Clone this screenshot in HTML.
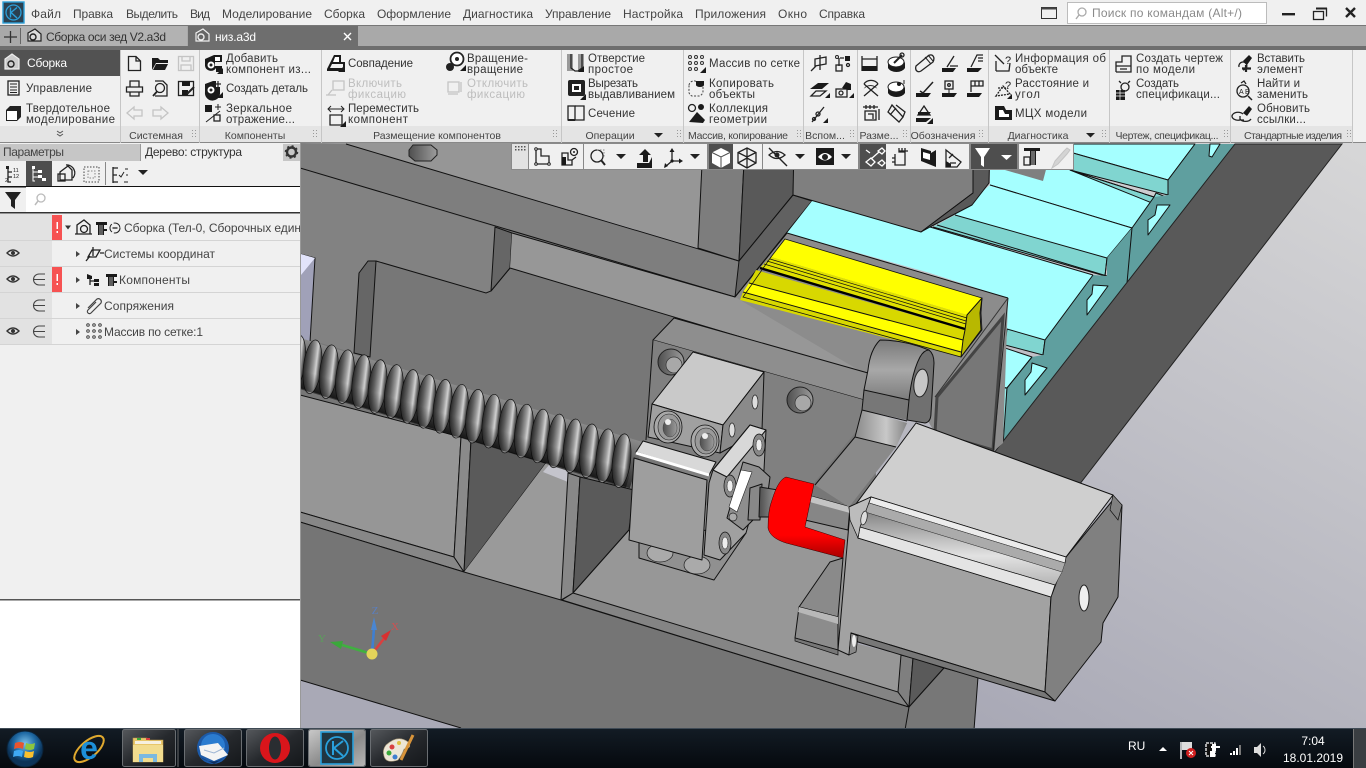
<!DOCTYPE html>
<html lang="ru"><head><meta charset="utf-8"><title>КОМПАС-3D</title>
<style>
html,body{margin:0;padding:0;width:1366px;height:768px;overflow:hidden;background:#f0f0f0}
svg{display:block;font-family:"Liberation Sans","DejaVu Sans",sans-serif}
.m{font-size:12px;fill:#444}
.r{font-size:11.5px;fill:#333}
.d{font-size:11.5px;fill:#bdbdbd}
.g{font-size:10.5px;fill:#444;text-anchor:middle}
.e{stroke:#111;stroke-width:1;stroke-linejoin:round}
.l{stroke:#111;stroke-width:1;fill:none}
.i{fill:none;stroke:#222;stroke-width:1.3}
.k{fill:#1a1a1a}
.gd{fill:none;stroke:#c4c4c4;stroke-width:1.3}
</style></head><body>
<svg width="1366" height="768" viewBox="0 0 1366 768" xmlns="http://www.w3.org/2000/svg">
<defs>
<linearGradient id="bg" gradientUnits="userSpaceOnUse" x1="1340" y1="143" x2="1020" y2="740"><stop offset="0" stop-color="#d6d6d7"/><stop offset="1" stop-color="#a9a9b6"/></linearGradient>
<linearGradient id="th" x1="0" x2="1" y1="0" y2="0"><stop offset="0" stop-color="#262626"/><stop offset=".3" stop-color="#5e5e5e"/><stop offset=".55" stop-color="#9c9c9c"/><stop offset=".7" stop-color="#d0d0d0"/><stop offset=".85" stop-color="#6c6c6c"/><stop offset="1" stop-color="#262626"/></linearGradient>
<linearGradient id="thv" x1="0" x2="0" y1="0" y2="1"><stop offset="0" stop-color="#8a8a8a"/><stop offset=".5" stop-color="#5a5a5a"/><stop offset="1" stop-color="#2e2e2e"/></linearGradient>
<linearGradient id="ths2" x1="0" x2="0" y1="0" y2="1"><stop offset="0" stop-color="#000" stop-opacity="0"/><stop offset="1" stop-color="#000" stop-opacity=".5"/></linearGradient>
<linearGradient id="red" x1="0" x2="0" y1="0" y2="1"><stop offset="0" stop-color="#ff0000"/><stop offset=".72" stop-color="#ff0000"/><stop offset="1" stop-color="#a80000"/></linearGradient>
<linearGradient id="gr" x1="0" x2="0" y1="0" y2="1"><stop offset="0" stop-color="#858585"/><stop offset=".6" stop-color="#e2e2e2"/><stop offset="1" stop-color="#b5b5b5"/></linearGradient>
<linearGradient id="ear" x1="0" x2="0" y1="0" y2="1"><stop offset="0" stop-color="#7a7a7a"/><stop offset=".5" stop-color="#a8a8a8"/><stop offset="1" stop-color="#7c7c7c"/></linearGradient>
<linearGradient id="fil" x1="0" x2="1" y1="0" y2="0"><stop offset="0" stop-color="#8a8a8a"/><stop offset=".6" stop-color="#c8c8c8"/><stop offset="1" stop-color="#858585"/></linearGradient>
<linearGradient id="oc" x1="0" x2="1" y1="0" y2="0"><stop offset="0" stop-color="#4f4f4f"/><stop offset="1" stop-color="#9c9c9c"/></linearGradient>
<linearGradient id="tb" x1="0" x2="0" y1="0" y2="1"><stop offset="0" stop-color="#131c25"/><stop offset="1" stop-color="#05090e"/></linearGradient>
<linearGradient id="btn" x1="0" x2="1" y1="0" y2="1"><stop offset="0" stop-color="#55585c"/><stop offset=".5" stop-color="#26292d"/><stop offset="1" stop-color="#14171a"/></linearGradient>
<linearGradient id="btna" x1="0" x2="1" y1="0" y2="1"><stop offset="0" stop-color="#c8c8c8"/><stop offset=".55" stop-color="#8a8a8a"/><stop offset="1" stop-color="#b5b5b5"/></linearGradient>
<radialGradient id="orb" cx=".5" cy=".35"><stop offset="0" stop-color="#7cc0e8"/><stop offset=".6" stop-color="#1f6aa5"/><stop offset="1" stop-color="#0c3358"/></radialGradient>
<clipPath id="vp"><rect x="300" y="143" width="1066" height="585"/></clipPath>
<clipPath id="tc"><rect x="64" y="218" width="236" height="20"/></clipPath>
<g id="ths"><ellipse cx="0" cy="0" rx="9" ry="27" fill="url(#th)" stroke="#111" stroke-width=".7" transform="rotate(-10)"/></g>
<g id="hl"><ellipse cx="0" cy="0" rx="14" ry="16" fill="#a8a8a8" stroke="#111" stroke-width=".8"/><ellipse cx="1" cy="0" rx="11" ry="13" fill="#9a9a9a" stroke="#222" stroke-width=".6"/><ellipse cx="2" cy="1" rx="7" ry="9" fill="url(#oc)" stroke="#333" stroke-width=".4"/><ellipse cx="0" cy="-5" rx="3" ry="3" fill="#eee"/></g>
<g id="bh"><ellipse cx="0" cy="0" rx="6" ry="11" fill="#888" stroke="#111" stroke-width=".7"/><ellipse cx="0" cy="0" rx="3" ry="6" fill="#eee" stroke="#222" stroke-width=".5"/></g>
<g id="ph"><circle cx="0" cy="0" r="13" fill="url(#oc)" stroke="#222"/><ellipse cx="3" cy="3" rx="8" ry="8" fill="#a8a8a8" stroke="#333" stroke-width=".7"/></g>
</defs>

<!-- ================= VIEWPORT ================= -->
<g clip-path="url(#vp)">
<rect x="300" y="143" width="1066" height="585" fill="url(#bg)"/>
<polygon points="300,143 703,143 698,248 346,144" fill="#969696"/>
<polygon points="300,168 735,297 867,375 880,520 640,560 300,420" fill="#777"/>
<polygon points="300,143 346,144 739,261 735,297 300,168" fill="#7e7e7e"/>
<polygon points="300,168 495,227 491,291 486,293 376,261 368,261 359,273 354,353 300,337" fill="#828282"/>
<line class="l" x1="346" y1="144" x2="739" y2="261"/>
<line class="l" x1="300" y1="168" x2="735" y2="297"/>
<polyline class="l" points="376,261 486,293 491,291 510,268"/>
<polygon class="e" points="495,227 512,233 510,268 491,291" fill="#666"/>
<polygon points="512,233 735,297 880,340 867,375 510,268" fill="#979797"/>
<polygon class="e" points="359,273 368,261 376,261 370,357 354,353" fill="#666"/>
<polygon points="413,145 431,145 437,150 437,155 431,161 415,161 409,156 409,150" fill="url(#oc)" stroke="#222"/>
<polygon class="e" points="300,254 315,258 310,342 300,339" fill="#a0a1b8"/>
<polygon points="301,254 315,258 301,275" fill="#e2e3fa"/>
<polygon class="e" points="703,143 745,143 739,261 698,248" fill="#7d7d7d"/>
<polygon class="e" points="745,143 795,143 793,195 739,261" fill="#595959"/>
<polygon class="e" points="793,195 812,201 735,297 739,261" fill="#616161"/>
<polygon points="812,201 930,227 1008,298 930,273 787,233" fill="#a5ffff"/>
<polygon class="e" points="1073,144 1195,144 1168,180 1073,153" fill="#a5ffff"/>
<polygon class="e" points="1073,153 1168,180 1168,195 1070,170" fill="#80d5d0"/>
<polygon points="990,170 1070,170 1154,197 1132,228 990,185" fill="#a5ffff"/>
<polygon class="e" points="1070,170 1154,197 1156,193 1171,199 1168,207 1157,205" fill="#80d5d0"/>
<line class="l" x1="990" y1="185" x2="1132" y2="228"/>
<line class="l" x1="1070" y1="170" x2="1154" y2="197"/>
<polygon points="990,185 1132,228 1107,258 955,215" fill="#a5ffff"/>
<polygon points="955,215 1107,258 1105,276 933,227" fill="#80d5d0"/>
<polyline class="l" points="990,185 1132,228 1107,258 955,215"/>
<polyline class="l" points="1107,258 1105,276 933,227"/>
<line class="l" x1="937" y1="225" x2="1107" y2="276"/>
<polygon points="930,227 1093,275 1045,340 1007,329 1008,298 930,273" fill="#a5ffff"/>
<line class="l" x1="930" y1="227" x2="1093" y2="275"/>
<polygon class="e" points="1007,329 1045,340 1043,355 1005,345" fill="#80d5d0"/>
<polygon class="e" points="1005,348 1032,357 1007,388 1002,387" fill="#a5ffff"/>
<polygon class="e" points="1002,388 1007,388 1004,444 998,442" fill="#90e8e6"/>
<polygon points="1195,144 1235,144 1003,445 1007,388 1032,357 1043,355 1045,340 1093,275 1107,276 1107,258 1132,228 1154,197 1168,195 1168,180" fill="#5f9f9f"/>
<polyline class="l" points="1195,144 1168,180 1168,195"/>
<line class="l" x1="1154" y1="197" x2="1132" y2="228"/>
<line class="l" x1="1132" y1="228" x2="1127" y2="283"/>
<polyline class="l" points="1107,258 1105,276"/>
<polyline class="l" points="1093,275 1045,340 1043,355"/>
<polyline class="l" points="1032,357 1007,388 1003,445"/>
<polygon class="e" points="1210,144 1220,144 1212,157 1209,156" fill="#a5ffff"/>
<polygon class="e" points="1157,205 1170,205 1148,235 1148,220 1155,215" fill="#a5ffff"/>
<polygon class="e" points="1093,285 1108,286 1087,315 1087,300 1092,294" fill="#a5ffff"/>
<polygon class="e" points="1032,363 1047,368 1025,395 1025,380 1031,372" fill="#a5ffff"/>
<polygon points="1235,144 1342,144 1079,485 990,458" fill="#595959" stroke="#222"/>
<polygon class="e" points="794,143 976,143 973,193 921,232 793,195" fill="#7f7f7f"/>
<polygon class="e" points="973,143 990,143 989,183 972,205 930,227 921,232 973,193" fill="#595959"/>
<polygon points="1002,143 1053,143 1043,181 1005,170" fill="#7f7f7f"/>
<polygon points="735,297 787,233 1008,298 1003,443 993,452 935,433 880,340 867,375" fill="#8c8c8c"/>
<polyline class="l" points="787,233 1008,298"/>
<polyline class="l" points="735,297 787,233"/>
<polygon points="1003,317 993,450 935,433 937,397" fill="#777" stroke="#444" stroke-width="3"/>
<line x1="1008" y1="298" x2="935" y2="397" stroke="#333" stroke-width="1"/>
<line x1="1008" y1="298" x2="993" y2="452" stroke="#222" stroke-width="1"/>
<polygon points="785,239 982,298 967,315 771,257" fill="#ff0"/>
<polygon points="771,257 967,315 965,330 760,268" fill="#e0e000"/>
<line x1="770" y1="259" x2="967" y2="318" stroke="#111" stroke-width=".7"/>
<line x1="767" y1="261" x2="966" y2="321" stroke="#111" stroke-width=".7"/>
<line x1="764" y1="264" x2="966" y2="324" stroke="#111" stroke-width=".7"/>
<polygon points="756,270 965,330 963,340 749,283" fill="#d8d800"/>
<polygon points="749,283 963,340 961,352 743,292" fill="#ff0"/>
<polygon points="743,292 961,352 961,357 740,300" fill="#d8d800"/>
<line x1="760" y1="268" x2="965" y2="329" stroke="#000" stroke-width="2.4"/>
<polygon points="785,239 982,298 981,313 982,330 961,357 743,297 771,257" fill="none" stroke="#111" stroke-width=".8"/>
<line class="l" x1="749" y1="283" x2="963" y2="340"/>
<line class="l" x1="743" y1="292" x2="961" y2="352"/>
<polygon class="e" points="982,298 980,313 981,330 961,357 963,340 965,330 967,315" fill="#b8b800" stroke-width=".8"/>
<line class="l" x1="512" y1="233" x2="735" y2="297"/>
<line class="l" x1="510" y1="268" x2="868" y2="375"/>
<polygon points="300,395 461,437 454,557 300,512" fill="#969696" stroke="#111"/>
<polygon points="300,512 454,557 464,572 300,522" fill="#878787" stroke="#111"/>
<polygon class="e" points="461,437 471,440 464,572 454,557" fill="#8a8a8a"/>
<polygon class="e" points="471,440 546,463 464,572" fill="#5a5a5a"/>
<polygon points="546,463 568,473 561,600 464,572" fill="#9a9a9a"/>
<polygon points="543,472 549,465 568,471 568,482" fill="#c4c4cc"/>
<polygon class="e" points="568,473 580,477 573,593 561,600" fill="#888"/>
<polygon class="e" points="580,477 634,490 629,530 573,593" fill="#5a5a5a"/>
<polygon points="573,593 629,530 640,480 850,510 843,640 901,655 898,692" fill="#979797"/>
<line class="l" x1="573" y1="593" x2="629" y2="530"/>
<polygon points="300,522 464,572 561,600 909,707 905,728 461,728 300,680" fill="#757575"/>
<polyline class="l" points="300,522 464,572 561,600 909,707"/>
<polygon points="573,593 898,692 909,707 562,600" fill="#848484" stroke="#111"/>
<line class="l" x1="300" y1="680" x2="461" y2="728"/>
<polygon class="e" points="901,655 913,658 909,707 898,692" fill="#7f7f7f"/>
<polygon class="e" points="913,658 944,668 909,707" fill="#5a5a5a"/>
<polygon class="e" points="944,668 978,677 974,730 905,730 909,707" fill="#777"/>
<g transform="translate(300,363) rotate(16.9)">
<rect x="-10" y="-24" width="362" height="48" fill="url(#thv)"/>
<use href="#ths" x="-4"/><use href="#ths" x="13"/><use href="#ths" x="30"/><use href="#ths" x="47"/><use href="#ths" x="64"/><use href="#ths" x="81"/><use href="#ths" x="98"/><use href="#ths" x="115"/><use href="#ths" x="132"/><use href="#ths" x="149"/><use href="#ths" x="166"/><use href="#ths" x="183"/><use href="#ths" x="200"/><use href="#ths" x="217"/><use href="#ths" x="234"/><use href="#ths" x="251"/><use href="#ths" x="268"/><use href="#ths" x="285"/><use href="#ths" x="302"/><use href="#ths" x="319"/><use href="#ths" x="336"/>
<rect x="-10" y="6" width="358" height="19" fill="url(#ths2)"/>
</g>
<polygon class="e" points="674,318 868,373 864,400 653,340" fill="#8e8e8e"/>
<polygon points="653,340 864,400 860,427 814,483 760,500 720,520 646,440" fill="#808080"/>
<polyline class="l" points="653,340 646,440"/>
<use href="#ph" x="671" y="362"/>
<use href="#ph" x="800" y="400"/>
<polygon class="e" points="693,352 764,372 723,425 652,404" fill="#c9c9c9"/>
<polygon class="e" points="652,404 723,425 720,453 648,437" fill="#a0a0a0"/>
<polygon class="e" points="764,372 723,425 720,453 762,430" fill="#8a8a8a"/>
<use href="#hl" x="668" y="427"/><use href="#hl" x="705" y="441"/>
<ellipse cx="755" cy="402" rx="3" ry="7" fill="#ddd" stroke="#222" stroke-width=".7"/>
<ellipse cx="732" cy="430" rx="3" ry="7" fill="#ddd" stroke="#222" stroke-width=".7"/>
<polygon class="e" points="639,540 639,558 714,580 746,533 700,530" fill="#909090"/>
<ellipse cx="660" cy="553" rx="13" ry="9" fill="#aaa" stroke="#222" stroke-width=".7"/>
<ellipse cx="697" cy="565" rx="13" ry="9" fill="#aaa" stroke="#222" stroke-width=".7"/>
<polygon class="e" points="643,441 716,462 709,475 636,452" fill="#d8d8d8"/>
<line x1="636" y1="453" x2="709" y2="475" stroke="#fff" stroke-width="3"/>
<polygon class="e" points="634,458 707,480 702,560 629,540" fill="#9e9e9e"/>
<polygon class="e" points="713,470 750,425 766,430 764,470 746,533 720,560 704,555 709,483" fill="#a0a0a0"/>
<polygon class="e" points="713,470 750,425 766,430 727,477" fill="#d8d8d8"/>
<use href="#bh" x="730" y="486"/><use href="#bh" x="759" y="445"/><use href="#bh" x="725" y="543"/>
<polygon class="e" points="807,495 850,507 848,530 805,520" fill="#868686"/>
<polygon points="807,495 850,507 850,513 806,501" fill="#c4c4c4"/>
<polygon class="e" points="743,462 759,467 770,477 766,507 743,530 727,518" fill="#8e8e8e"/>
<polygon points="741,470 752,472 737,512 729,507" fill="#fff" stroke="#222" stroke-width=".6"/>
<circle cx="733" cy="517" r="4" fill="#aaa" stroke="#222" stroke-width=".7"/>
<polygon class="e" points="750,488 762,484 760,520 748,520" fill="#888"/>
<polygon class="e" points="760,487 778,490 772,517 759,517" fill="url(#oc)"/>
<path d="M786 477L814 484L805 527L845 540L843 558L786 543Q770 538 768 528Q768 510 772 500Q778 480 786 477Z" fill="url(#red)" stroke="#300" stroke-width=".5"/>
<!-- clevis -->
<polygon points="855,437 907,423 896,447 849,507 815,485" fill="#8a8a8a"/>
<line class="l" x1="855" y1="437" x2="815" y2="485"/>
<polygon points="855,437 896,447 907,423 862,410" fill="url(#fil)"/>
<path d="M880 340Q905 340 929 350Q922 356 918 367L913 380L909 400L864 390L868 370Q871 350 880 340Z" fill="url(#ear)"/>
<polygon points="864,390 909,400 907,420 862,410" fill="#777"/>
<path d="M929 350Q934 354 934 363L931 413Q931 422 925 423L907 420L909 400Q912 372 920 357Q924 350 929 350Z" fill="#707070" stroke="#111"/>
<ellipse cx="921" cy="383" rx="7" ry="14" fill="#c6c6c6" stroke="#222" transform="rotate(8 921 383)"/>
<path class="l" d="M880 340Q870 350 868 370L864 390L862 410L855 437M880 340Q905 340 929 350M864 390L909 400M862 410L907 421M855 437L896 447"/>
<polygon class="e" points="916,423 929,430 930,447 921,445 916,436" fill="#888"/>
<polygon class="e" points="930,430 935,440 995,458 990,470 930,450" fill="#8f8f8f"/>
<line x1="995" y1="458" x2="992" y2="470" stroke="#111"/>
<polygon class="e" points="799,607 830,562 843,558 838,617" fill="#8a8a8a"/>
<polygon class="e" points="799,607 838,617 838,650 795,638" fill="#8c8c8c"/>
<polygon points="799,607 838,617 838,624 798,612" fill="#b8b8b8"/>
<polygon points="795,638 838,650 838,655 795,641" fill="#777" stroke="#111" stroke-width=".7"/>
<!-- motor -->
<polygon class="e" points="850,512 858,538 1051,597 1045,692 851,633 849,655 838,650" fill="#a2a2a2"/>
<polygon class="e" points="851,633 1045,692 1055,701 858,642" fill="#777"/>
<polygon class="e" points="1051,597 1066,557 1113,500 1122,505 1118,597 1103,623 1101,642 1055,701 1045,692" fill="#808080"/>
<ellipse cx="1084" cy="598" rx="5" ry="13" fill="#eee" stroke="#222"/>
<polygon class="e" points="916,423 1113,495 1066,557 871,497 849,507 850,512" fill="#cfcfcf"/>
<polygon points="1113,495 1122,505 1118,520 1110,510" fill="#808080" stroke="#111" stroke-width=".7"/>
<polygon points="871,497 1066,557 1065,563 869,503" fill="#ececec" stroke="#111" stroke-width=".7"/>
<polygon points="869,503 1065,563 1062,572 865,512" fill="#ababab" stroke="#333" stroke-width=".5"/>
<polygon points="865,512 1062,572 1055,585 860,527" fill="url(#gr)" stroke="#333" stroke-width=".5"/>
<polygon points="860,527 1055,585 1051,597 858,538" fill="#e4e4e4" stroke="#111" stroke-width=".7"/>
<polygon points="849,507 871,497 860,527 858,538 850,520" fill="#bcbcbc" stroke="#111" stroke-width=".7"/>
<ellipse cx="864" cy="518" rx="3" ry="7" fill="#ddd" stroke="#222" stroke-width=".7" transform="rotate(12 864 518)"/>
<polygon points="851,633 858,636 856,652 849,655" fill="#888" stroke="#111" stroke-width=".7"/>
<ellipse cx="854" cy="641" rx="2" ry="6" fill="#eee"/>
<!-- triad -->
<line x1="372" y1="654" x2="374" y2="628" stroke="#3f7fd0" stroke-width="2.6"/>
<polygon points="374,617 371,630 377,630" fill="#4a86d2"/>
<text x="375" y="614" font-size="11" fill="#5a7fc0" text-anchor="middle" style="font-family:'Liberation Serif',serif">Z</text>
<line x1="372" y1="654" x2="386" y2="636" stroke="#d84040" stroke-width="2.6"/>
<polygon points="391,630 381,636 386,641" fill="#d83030"/>
<text x="395" y="630" font-size="11" fill="#d05050" text-anchor="middle" style="font-family:'Liberation Serif',serif">X</text>
<line x1="372" y1="654" x2="342" y2="645" stroke="#40b040" stroke-width="2.6"/>
<polygon points="330,642 343,641 341,649" fill="#3aa83a"/>
<text x="322" y="642" font-size="11" fill="#5aa05a" text-anchor="middle" style="font-family:'Liberation Serif',serif">Y</text>
<circle cx="372" cy="654" r="5.5" fill="#e4d45a"/>
</g>

<!-- ================= TITLE BAR ================= -->
<rect x="0" y="0" width="1366" height="26" fill="#f0f0f0"/>
<rect x="0" y="25" width="1366" height="1" fill="#777"/>
<rect x="3" y="2" width="21" height="21" fill="#2b4050" stroke="#2ca0da" stroke-width="1.4"/>
<circle cx="13.5" cy="12.5" r="7.5" fill="none" stroke="#2ca0da" stroke-width="1.3"/>
<path d="M10.5 7.5V17.5M17 7.5L11 12.5L17 18" fill="none" stroke="#2ca0da" stroke-width="1.4"/>
<g class="m">
<text x="31" y="18" textLength="30">Файл</text>
<text x="73" y="18" textLength="40">Правка</text>
<text x="126" y="18" textLength="52">Выделить</text>
<text x="190" y="18" textLength="20">Вид</text>
<text x="222" y="18" textLength="90">Моделирование</text>
<text x="324" y="18" textLength="41">Сборка</text>
<text x="377" y="18" textLength="74">Оформление</text>
<text x="463" y="18" textLength="70">Диагностика</text>
<text x="545" y="18" textLength="66">Управление</text>
<text x="623" y="18" textLength="60">Настройка</text>
<text x="695" y="18" textLength="71">Приложения</text>
<text x="778" y="18" textLength="29">Окно</text>
<text x="819" y="18" textLength="46">Справка</text>
</g>
<rect x="1041.500" y="7.500" width="15" height="11" fill="none" stroke="#333"/><rect x="1041.500" y="7.500" width="15" height="2" fill="#444"/>
<rect x="1067.500" y="2.500" width="199" height="21" fill="#fff" stroke="#bcbcbc"/>
<circle cx="1082" cy="12" r="4" fill="none" stroke="#aaa" stroke-width="1.3"/><line x1="1079" y1="15" x2="1076" y2="19" stroke="#aaa" stroke-width="1.4"/>
<text x="1092" y="17" font-size="12" fill="#8a8a8a" textLength="150">Поиск по командам (Alt+/)</text>
<rect x="1282" y="13" width="13" height="2.4" fill="#222"/>
<rect x="1313.500" y="11.500" width="10" height="8" fill="none" stroke="#222" stroke-width="1.3"/><path d="M1317 8.500h9.500v8" fill="none" stroke="#222" stroke-width="1.3"/><rect x="1316" y="7.500" width="11" height="2" fill="#222"/>
<path d="M1346 8L1355 17M1355 8L1346 17" stroke="#222" stroke-width="2.4"/>

<!-- ================= TAB BAR ================= -->
<rect x="0" y="26" width="1366" height="20" fill="#a9a9a9"/>
<rect x="0" y="46" width="1366" height="4" fill="#6e6e6e"/>
<path d="M4 37H17M10.500 31V43" stroke="#333" stroke-width="1.3"/>
<rect x="20" y="28" width="1" height="16" fill="#666"/>
<rect x="21" y="26" width="166" height="20" fill="#b2b2b2"/>
<rect x="188" y="26" width="170" height="24" fill="#6e6e6e"/>
<path d="M28 41V33L35 29L41 34V41Z" fill="#ddd" stroke="#222" stroke-width="1.2"/><circle cx="33" cy="37" r="3" fill="none" stroke="#222" stroke-width="1.4"/>
<text x="46" y="41" font-size="12" fill="#333" textLength="120">Сборка оси зед V2.a3d</text>
<path d="M196 41V33L203 29L209 34V41Z" fill="#666" stroke="#eee" stroke-width="1.2"/><circle cx="201" cy="37" r="3" fill="none" stroke="#eee" stroke-width="1.4"/>
<text x="215" y="41" font-size="12" fill="#fff" textLength="41">низ.a3d</text>
<path d="M344 33L351 40M351 33L344 40" stroke="#fff" stroke-width="1.4"/>

<!-- ================= RIBBON ================= -->
<rect x="0" y="50" width="1366" height="93" fill="#f0f0f0"/>
<rect x="0" y="126" width="1352" height="17" fill="#e4e4e4"/>
<rect x="0" y="142" width="1366" height="1" fill="#888"/>
<rect x="0" y="50" width="120" height="26" fill="#525252"/>
<path d="M5 69V59L12 54L19 59V69Z" fill="#ccc" stroke="#eee" stroke-width="1.2"/><circle cx="11" cy="64" r="3" fill="none" stroke="#222" stroke-width="1.4"/>
<text x="27" y="67" font-size="12" fill="#fff" textLength="40">Сборка</text>
<rect x="8" y="81" width="11" height="14" fill="none" stroke="#222" stroke-width="1.3"/><path d="M10 84h7M10 87h7M10 90h7M10 92.500h7" stroke="#222"/>
<text x="26" y="92" class="r" textLength="66">Управление</text>
<path d="M6 110L10 106H21V117L17 121H6Z" fill="#222"/><path d="M7 111H17V120H7Z" fill="#fff"/>
<text x="26" y="112" class="r" textLength="84">Твердотельное</text>
<text x="26" y="123" class="r" textLength="89">моделирование</text>
<path d="M57 131l3 2 3-2M57 134l3 2 3-2" fill="none" stroke="#555"/>
<g fill="#c6c6c6">
<rect x="120" y="50" width="1" height="93"/><rect x="199" y="50" width="1" height="93"/><rect x="321" y="50" width="1" height="93"/><rect x="561" y="50" width="1" height="93"/><rect x="683" y="50" width="1" height="93"/><rect x="803" y="50" width="1" height="93"/><rect x="857" y="50" width="1" height="93"/><rect x="910" y="50" width="1" height="93"/><rect x="988" y="50" width="1" height="93"/><rect x="1109" y="50" width="1" height="93"/><rect x="1230" y="50" width="1" height="93"/><rect x="1352" y="50" width="1" height="93"/>
</g>
<g class="g">
<text x="156" y="139">Системная</text><text x="255" y="139">Компоненты</text><text x="437" y="139">Размещение компонентов</text><text x="610" y="139">Операции</text><text x="738" y="139" textLength="100">Массив, копирование</text><text x="825" y="139">Вспом...</text><text x="879" y="139">Разме...</text><text x="943" y="139">Обозначения</text><text x="1038" y="139">Диагностика</text><text x="1167" y="139" textLength="103">Чертеж, спецификац...</text><text x="1293" y="139" textLength="98">Стандартные изделия</text>
</g>
<g fill="#999">
<path id="gp" d="M192 130h1v1h-1zM195 130h1v1h-1zM192 133h1v1h-1zM195 133h1v1h-1zM192 136h1v1h-1zM195 136h1v1h-1z"/>
<use href="#gp" x="121"/>
<use href="#gp" x="361"/><use href="#gp" x="485"/><use href="#gp" x="605"/><use href="#gp" x="658"/><use href="#gp" x="711"/><use href="#gp" x="787"/><use href="#gp" x="910"/><use href="#gp" x="1032"/><use href="#gp" x="1155"/>
</g>
<path d="M654 133h9l-4.500 4.500z M1086 133h9l-4.500 4.500z" fill="#222"/>
<g class="r">
<text x="226" y="62" textLength="52">Добавить</text><text x="226" y="73" textLength="85">компонент из...</text>
<text x="226" y="92" textLength="82">Создать деталь</text>
<text x="226" y="112" textLength="66">Зеркальное</text><text x="226" y="123" textLength="69">отражение...</text>
<text x="348" y="67" textLength="65">Совпадение</text>
<text x="348" y="112" textLength="71">Переместить</text><text x="348" y="123" textLength="60">компонент</text>
<text x="467" y="62" textLength="61">Вращение-</text><text x="467" y="73" textLength="56">вращение</text>
<text x="588" y="62" textLength="57">Отверстие</text><text x="588" y="73" textLength="45">простое</text>
<text x="588" y="87" textLength="50">Вырезать</text><text x="588" y="98" textLength="87">выдавливанием</text>
<text x="588" y="117" textLength="47">Сечение</text>
<text x="709" y="67" textLength="91">Массив по сетке</text>
<text x="709" y="87" textLength="65">Копировать</text><text x="709" y="98" textLength="46">объекты</text>
<text x="709" y="112" textLength="59">Коллекция</text><text x="709" y="123" textLength="58">геометрии</text>
<text x="1015" y="62" textLength="91">Информация об</text><text x="1015" y="73" textLength="43">объекте</text>
<text x="1015" y="87" textLength="74">Расстояние и</text><text x="1015" y="98" textLength="25">угол</text>
<text x="1015" y="117" textLength="72">МЦХ модели</text>
<text x="1136" y="62" textLength="87">Создать чертеж</text><text x="1136" y="73" textLength="59">по модели</text>
<text x="1136" y="87" textLength="43">Создать</text><text x="1136" y="98" textLength="84">спецификаци...</text>
<text x="1257" y="62" textLength="48">Вставить</text><text x="1257" y="73" textLength="46">элемент</text>
<text x="1257" y="87" textLength="43">Найти и</text><text x="1257" y="98" textLength="51">заменить</text>
<text x="1257" y="112" textLength="53">Обновить</text><text x="1257" y="123" textLength="49">ссылки...</text>
</g>
<g class="d">
<text x="348" y="87" textLength="54">Включить</text><text x="348" y="98" textLength="58">фиксацию</text>
<text x="467" y="87" textLength="61">Отключить</text><text x="467" y="98" textLength="58">фиксацию</text>
</g>
<path class="i" d="M128.500 56.500H136L140.500 61V70.500H128.500ZM136 56.500V61H140.500"/>
<path class="k" d="M152 58H158L160 60H168V63H156L152 70ZM156 64H168L165 70H153Z"/>
<rect class="gd" x="178.500" y="56.500" width="15" height="14"/><path class="gd" d="M182 56.500V61H190V56.500M181 70V65H191V70"/>
<path class="i" d="M130 87V81H139V87M126.500 87H142.500V92H126.500ZM130 92V96H139V92"/>
<path class="i" d="M155 81H163L167 85V96H155"/><circle class="i" cx="160" cy="88" r="4.500"/><path d="M157 91.500L153 96" stroke="#222" stroke-width="1.800"/>
<rect class="i" x="178.500" y="81.500" width="15" height="14"/><path class="k" d="M182 81H190V86H182ZM182 90H188V95H182Z"/><path d="M187 94L194 87" stroke="#222" stroke-width="2"/>
<path class="gd" d="M127 113L134 107V110H142V116H134V119ZM168 113L161 107V110H153V116H161V119Z"/>
<path class="k" d="M205 59L214 55H222V62H215V66L222 66V72H216V68A6 6 0 0 1 205 66Z"/><circle cx="211" cy="65" r="3.500" fill="#fff"/><circle cx="211" cy="65" r="1.500" fill="#222"/><rect x="215" y="57" width="5" height="4" fill="#fff"/>
<path class="k" d="M217 74L223 68V74Z"/>
<path class="k" d="M205 84L213 81H216V87H220V94A7 7 0 0 1 205 92Z"/><circle cx="211" cy="90" r="3.500" fill="#fff"/><circle cx="211" cy="90" r="1.500" fill="#222"/><path d="M218 81V87M215 84H221" stroke="#222" stroke-width="1.200"/><path class="k" d="M217 98L223 92V98Z"/>
<rect class="k" x="205" y="105" width="7" height="7"/><path d="M218 104V110M215 107H221" stroke="#222"/><path d="M206 122L220 111" stroke="#222"/><rect class="i" x="214" y="115" width="6" height="6"/>
<path class="k" d="M327 69L334 55H341V62H345V71H327ZM330 68H343V64H332Z"/><path class="k" d="M338 72L345 65V72Z"/><path d="M335 57H339V62H333Z" fill="#fff"/>
<path class="gd" d="M333 81H344V90H333ZM332 90L328 95M326 95H336"/>
<path class="i" d="M330 115H342V125H330Z"/><path d="M328 109H344M331 106L328 109L331 112M341 106L344 109L341 112" fill="none" stroke="#222"/><path class="k" d="M340 127L346 121V127Z"/>
<circle cx="450" cy="67" r="4" fill="#222"/><circle cx="457" cy="59" r="6.500" fill="#fff" stroke="#222" stroke-width="1.800"/><circle cx="457" cy="59" r="2" fill="#222"/><path class="k" d="M460 71L466 65V71Z"/>
<path class="gd" d="M448 82H459V92H448ZM461 82V92M448 94H458"/>
<path fill="#999" d="M567 54H573V71H567ZM584 54H578V71H584Z"/><path class="i" d="M571 54V68L575 71H578L582 68V54"/><path class="k" d="M578 72L584 66V72Z"/>
<rect x="568" y="80" width="17" height="16" rx="2" fill="#222"/><rect x="572" y="84" width="9" height="8" fill="#fff"/><rect x="574" y="86" width="5" height="4" fill="#222"/><path class="k" d="M580 100L586 94V100Z"/>
<rect class="i" x="568" y="106" width="7" height="14"/><path class="i" d="M575 106L578 106H584V120H575"/><path d="M568 120L575 120" stroke="#222" stroke-width="2"/>
<g fill="none" stroke="#333"><circle cx="690" cy="57" r="1.500"/><circle cx="696" cy="57" r="1.500"/><circle cx="702" cy="57" r="1.500"/><circle cx="690" cy="63" r="1.500"/><circle cx="696" cy="63" r="1.500"/><circle cx="702" cy="63" r="1.500"/><circle cx="690" cy="69" r="1.500"/><circle cx="696" cy="69" r="1.500"/></g><path class="k" d="M700 73L706 67V73Z"/>
<path d="M689 85a5 5 0 0 1 8-3h6v9a5 5 0 0 1-4 5h-7a5 5 0 0 1-3-6Z" fill="none" stroke="#444" stroke-dasharray="2 1.500"/><path class="k" d="M696 81h8v4a4 2 0 0 1-8 0Z"/>
<circle cx="692" cy="108" r="3.500" class="i"/><circle cx="701" cy="107" r="3" class="k"/><path class="k" d="M689 122L697 112L705 120L703 123Z"/>
<path class="i" d="M815 66L815 59L826 57L826 64ZM820 55V70M811 71L816 66"/><circle cx="837" cy="57" r="1.500" fill="none" stroke="#222"/><rect class="k" x="845" y="56" width="5" height="5"/><path class="i" d="M840 58H844M839 58V66"/><rect class="i" x="836" y="65" width="6" height="6"/><circle cx="848" cy="65" r="1.500" class="i"/>
<path class="k" d="M810 89L818 83H829L822 89Z"/><path class="i" d="M811 96L816 91H826L820 96Z"/><path class="k" d="M825 98L830 93V98Z"/>
<rect class="i" x="836" y="89" width="11" height="8"/><circle class="i" cx="841" cy="93" r="2"/><path class="k" d="M842 88L846 82L851 84V90H848Z"/><path class="k" d="M849 98L854 93V98Z"/>
<path class="i" d="M812 122L824 107"/><circle cx="818" cy="114" r="2" class="i"/><circle cx="814" cy="119" r="1.500" class="i"/><path class="k" d="M823 123L828 118V123Z"/>
<path class="i" d="M862 56V71M877 56V71M862 59H877"/><path class="k" d="M862 66H877V71H862Z"/>
<path class="k" d="M888 62A9 6 0 0 0 905 62V68A9 6 0 0 1 888 68Z"/><ellipse cx="896" cy="62" rx="8" ry="5" fill="#fff" stroke="#222"/><path d="M894 63L902 55" stroke="#222" stroke-width="2"/><circle cx="902" cy="55" r="2" class="i"/>
<path class="k" d="M863 90A9 9 0 0 1 878 90L876 87A7 5 0 0 0 865 87Z"/><path class="i" d="M864 84A8 7 0 0 1 878 84M864 96L878 84M864 84L878 96"/>
<path class="k" d="M888 87A9 6 0 0 0 905 87V93A9 6 0 0 1 888 93Z"/><ellipse cx="896" cy="87" rx="8" ry="5" fill="#fff" stroke="#222"/><circle cx="899" cy="84" r="2" class="k"/><path d="M904 80v4" stroke="#222"/>
<rect class="i" x="865" y="111" width="11" height="9"/><path class="i" d="M863 107h15M866 105v4M870 105v4M874 105v4M868 114h5v5M879 109v11"/>
<path class="i" d="M892 105L903 117L899 122L888 112ZM896 108L890 115M903 117L905 112L896 105"/>
<path class="i" d="M916 66L928 56A4 6 30 0 1 933 62L921 71A4 6 30 0 1 916 66Z"/><path d="M925 57L931 64M928 55L933 61" stroke="#222"/>
<path class="k" d="M942 68H956L953 72H942Z"/><path class="i" d="M947 67L954 56M950 66H958"/>
<path class="k" d="M967 68H982L978 72H967Z"/><path class="i" d="M971 67L977 55H983M978 58H983M978 61H983"/>
<path class="k" d="M916 93H931L928 97H916Z"/><path d="M920 91L923 93L933 82" fill="none" stroke="#222" stroke-width="1.500"/>
<path class="k" d="M942 93H957L954 97H942Z"/><rect class="i" x="945" y="81" width="8" height="8"/><path d="M949 89V93" stroke="#222"/><circle cx="949" cy="85" r="1.300" class="i"/>
<path class="k" d="M967 93H982L979 97H967Z"/><path class="i" d="M971 92V81H983V86H971M975 81V86M979 81V86"/>
<path class="k" d="M916 118H931L926 122H916Z"/><path class="i" d="M924 106L930 115H918Z"/><path class="k" d="M918 112H931L928 115H918Z"/><path class="k" d="M927 124L933 118V124Z"/>
<path class="i" d="M996 71H1009L1010 63M996 71L996 61M995 55L1004 64"/><text x="1005" y="64" font-size="11" fill="#222">?</text>
<path class="i" d="M996 96L1003 86L1010 94L996 96ZM998 88H1008" stroke-dasharray="2 1"/><text x="1005" y="89" font-size="11" fill="#222">?</text><path class="k" d="M1007 99L1012 94V99Z"/>
<path class="k" d="M995 106H1004L1006 110H1012V120H995Z"/><path d="M999 110H1003L1005 114H1009V117H999Z" fill="#fff"/>
<path class="i" d="M1116 72V62H1122V56H1131V66H1116M1116 72H1131V66M1120 69H1127"/>
<rect class="k" x="1116" y="90" width="9" height="10"/><path d="M1116 93H1125M1116 96H1125M1120 90V100" stroke="#fff" stroke-width=".7"/><circle class="i" cx="1125" cy="87" r="4"/><path class="i" d="M1119 81L1121 83M1130 81L1128 83"/>
<path class="i" d="M1239 67A4 4 0 1 1 1243 70"/><path class="k" d="M1243 61L1249 55L1252 58L1247 65Z"/><path d="M1246 65V72M1242 68.500H1251" stroke="#222" stroke-width="2.200"/>
<circle class="i" cx="1243" cy="91" r="6"/><text x="1239" y="94" font-size="7" fill="#222">A</text><text x="1245" y="94" font-size="7" fill="#222">B</text><path d="M1248 96L1252 100" stroke="#222" stroke-width="1.500"/><path class="i" d="M1241 83L1244 81L1246 84"/>
<path class="k" d="M1243 113L1249 106L1252 109L1247 116Z"/><path class="i" d="M1243 114A6 4 0 1 0 1240 120M1240 119A6 4 0 0 0 1251 119M1240 116L1240 120L1244 120"/>

<!-- ================= LEFT PANEL ================= -->
<rect x="0" y="143" width="300" height="457" fill="#f0f0f0"/>
<rect x="0" y="600" width="300" height="128" fill="#fff"/>
<rect x="0" y="599" width="300" height="1.500" fill="#555"/>
<rect x="300" y="143" width="1" height="585" fill="#999"/>
<rect x="0" y="144" width="140" height="17" fill="#c6c6c6"/>
<rect x="140" y="144" width="1" height="17" fill="#999"/>
<rect x="283" y="144" width="17" height="17" fill="#c6c6c6"/>
<text x="3" y="156" font-size="12" fill="#444" textLength="61">Параметры</text>
<text x="145" y="156" font-size="12" fill="#333" textLength="97">Дерево: структура</text>
<circle cx="291.500" cy="152" r="4.500" fill="none" stroke="#333" stroke-width="2.400"/><circle cx="291.500" cy="152" r="6" fill="none" stroke="#333" stroke-width="1.500" stroke-dasharray="2 2.700"/>
<rect x="26" y="161" width="26" height="25" fill="#4e4e4e"/>
<rect x="105" y="162" width="1" height="23" fill="#888"/>
<path class="i" d="M8 168V182H11M8 172H12M8 177H12" stroke-width="1"/><rect x="6" y="166" width="3" height="3" fill="#222"/><text x="13" y="172" font-size="5.500" fill="#222">11</text><text x="13" y="178" font-size="5.500" fill="#222">12</text><text x="5" y="182" font-size="5.500" fill="#222">2</text>
<path d="M33 167V181H35M33 172H38M33 177H38" fill="none" stroke="#fff"/><rect x="32" y="166" width="3" height="3" fill="#fff"/><rect x="38" y="170" width="4" height="3" fill="#fff"/><rect x="38" y="175" width="4" height="3" fill="#fff"/><rect x="42" y="178" width="4" height="3" fill="#fff"/>
<path class="i" d="M60 180V172L68 166L72 170V180ZM66 165A8 8 0 0 1 73 178" stroke-width="1"/><rect class="i" x="58" y="174" width="7" height="7" stroke-width="1"/>
<rect x="84" y="167" width="15" height="15" fill="none" stroke="#444" stroke-dasharray="1.500 1.500"/><rect x="88" y="171" width="7" height="7" fill="none" stroke="#888" stroke-dasharray="1.500 1.500"/>
<path class="i" d="M113 167V183M113 168H118M113 175H117M113 182H118" stroke-width="1"/><path d="M119 175L121 177L124 172" fill="none" stroke="#222"/><path d="M125 169H128M126 175H128M124 182H128" stroke="#222"/>
<path d="M138 170H148L143 175Z" fill="#222"/>
<rect x="0" y="186" width="300" height="1.500" fill="#111"/>
<rect x="26" y="187" width="274" height="25" fill="#fff"/>
<path d="M5 192H21L15 200V209L11 206V200Z" fill="#222"/>
<circle cx="41" cy="198" r="4" fill="none" stroke="#bbb" stroke-width="1.300"/><line x1="38" y1="201" x2="35" y2="205" stroke="#bbb" stroke-width="1.500"/>
<rect x="0" y="212" width="300" height="1.500" fill="#333"/>
<rect x="0" y="214" width="52" height="130" fill="#e2e2e2"/>
<g fill="#d4d4d4"><rect x="0" y="240" width="300" height="1"/><rect x="0" y="266" width="300" height="1"/><rect x="0" y="292" width="300" height="1"/><rect x="0" y="318" width="300" height="1"/><rect x="0" y="344" width="300" height="1"/></g>
<rect x="52" y="215" width="10" height="25" fill="#f65252"/><rect x="52" y="267" width="10" height="25" fill="#f65252"/>
<g fill="#fff"><rect x="56.500" y="222" width="1.500" height="7"/><rect x="56.500" y="231" width="1.500" height="2"/><rect x="56.500" y="274" width="1.500" height="7"/><rect x="56.500" y="283" width="1.500" height="2"/></g>
<g fill="none" stroke="#333" stroke-width="1.400"><path d="M7 253Q13 247 19 253Q13 259 7 253Z"/><path d="M7 279Q13 273 19 279Q13 285 7 279Z"/><path d="M7 331Q13 325 19 331Q13 337 7 331Z"/></g>
<g fill="#333"><circle cx="13" cy="253" r="2"/><circle cx="13" cy="279" r="2"/><circle cx="13" cy="331" r="2"/></g>
<g fill="none" stroke="#444" stroke-width="1.100"><path d="M45 274H39A5 5 0 0 0 39 285H45M34 279.500H45"/><path d="M45 300H39A5 5 0 0 0 39 311H45M34 305.500H45"/><path d="M45 326H39A5 5 0 0 0 39 337H45M34 331.500H45"/></g>
<path d="M65 225.500h6l-3 4z" fill="#333"/><path d="M76 251v6l4-3z M76 277v6l4-3z M76 303v6l4-3z M76 329v6l4-3z" fill="#444"/>
<path class="i" d="M77 234V225L84 220L90 225V234ZM75 234H92" stroke-width="1.200"/><circle class="i" cx="84" cy="229" r="3.500" stroke-width="1.500"/>
<path class="k" d="M96 222H107V225H104V229H107V231H104V235H98V225H96Z"/><path d="M100 225V235M102 225V235" stroke="#fff" stroke-width=".6"/>
<circle cx="115" cy="228" r="5" fill="none" stroke="#222" stroke-dasharray="9 2"/><path d="M112.500 228H117.500" stroke="#222" stroke-width="1.300"/>
<text x="124" y="232" font-size="12" fill="#444" clip-path="url(#tc)" textLength="177">Сборка (Тел-0, Сборочных един</text>
<path class="i" d="M92 250H100L96 257H88ZM93 247V256M86 261L90 256M100 253H104" stroke-width="1"/>
<text x="104" y="258" font-size="12" fill="#444" textLength="111">Системы координат</text>
<path class="k" d="M87 274L92 276V279H87Z"/><path class="i" d="M90 278V285M90 281H94" stroke-width="1"/><rect class="k" x="94" y="279" width="5" height="3"/><rect class="k" x="94" y="283" width="5" height="3"/>
<path class="k" d="M106 274H117V277H114V281H117V283H114V286H108V277H106Z"/><path d="M110 277V286M112 277V286" stroke="#fff" stroke-width=".6"/>
<text x="119" y="284" font-size="12" fill="#444" textLength="71">Компоненты</text>
<path d="M88 308L97 299A3 3 0 0 1 101 303L91 313A2 2 0 0 1 88 310L96 302" fill="none" stroke="#444" stroke-width="1.200"/>
<text x="104" y="310" font-size="12" fill="#444" textLength="70">Сопряжения</text>
<g fill="none" stroke="#444"><circle cx="88" cy="325" r="1.300"/><circle cx="94" cy="325" r="1.300"/><circle cx="100" cy="325" r="1.300"/><circle cx="88" cy="331" r="1.300"/><circle cx="94" cy="331" r="1.300"/><circle cx="100" cy="331" r="1.300"/><circle cx="88" cy="337" r="1.300"/><circle cx="94" cy="337" r="1.300"/><circle cx="100" cy="337" r="1.300"/></g>
<text x="104" y="336" font-size="12" fill="#444" textLength="99">Массив по сетке:1</text>

<!-- ================= VIEW TOOLBAR ================= -->
<rect x="511.500" y="143.500" width="562" height="26" fill="#f0f0f0" stroke="#8a8a8a"/>
<rect x="512" y="144" width="16" height="25" fill="#e2e2e2"/>
<g fill="#555"><rect x="515" y="146" width="1.500" height="1.500"/><rect x="518" y="146" width="1.500" height="1.500"/><rect x="521" y="146" width="1.500" height="1.500"/><rect x="524" y="146" width="1.500" height="1.500"/><rect x="515" y="149" width="1.500" height="1.500"/><rect x="518" y="149" width="1.500" height="1.500"/><rect x="521" y="149" width="1.500" height="1.500"/><rect x="524" y="149" width="1.500" height="1.500"/></g>
<g fill="#888"><rect x="528" y="144" width="1" height="25"/><rect x="583" y="144" width="1" height="25"/><rect x="707" y="144" width="2" height="25"/><rect x="762" y="144" width="1" height="25"/><rect x="858" y="144" width="2" height="25"/><rect x="969" y="144" width="2" height="25"/><rect x="1017" y="144" width="2" height="25"/></g>
<rect x="709" y="144" width="24" height="25" fill="#4e4e4e"/>
<rect x="860" y="144" width="26" height="25" fill="#4e4e4e"/>
<rect x="971" y="144" width="46" height="25" fill="#4e4e4e"/>
<path class="i" d="M536 149V164H549V156H541V149Z"/><g fill="#fff" stroke="#222"><circle cx="536" cy="149" r="1.300"/><circle cx="536" cy="164" r="1.300"/><circle cx="549" cy="164" r="1.300"/></g>
<path class="i" d="M562 165V153H568V160H572V165ZM572 160L576 157"/><path class="k" d="M562 157H566V165H562Z"/><circle cx="574" cy="152" r="3.500" class="i"/><circle cx="574" cy="152" r="1" fill="#222"/>
<circle class="i" cx="597" cy="156" r="6"/><path d="M601 160L605 165" stroke="#222" stroke-width="2"/><path d="M597 150h7v8" fill="none" stroke="#888" stroke-dasharray="1.500 1.500"/>
<path d="M616 154h10l-5 5z M690 154h10l-5 5z M795 154h10l-5 5z M841 154h10l-5 5z" fill="#222"/>
<path class="k" d="M645 149L651 155H648V162H643V155H639Z"/><path class="k" d="M637 164H649L652 158V169H637Z" transform="translate(0 -1)"/>
<path class="i" d="M672 150V161M672 161L665 167M672 161H680"/><path class="k" d="M672 148l-2.500 4h5zM683 161l-4-2.500v5zM664 168l1-5 3 3z"/><circle cx="672" cy="161" r="1.600" class="k"/>
<path d="M721 148L730 152.500V163L721 168L712 163V152.500Z" fill="#fff"/><path d="M712 152.500L721 157L730 152.500M721 157V168" stroke="#4e4e4e" fill="none"/>
<path class="i" d="M747 148L756 152.500V163L747 168L738 163V152.500ZM738 152.500L747 157L756 152.500M747 157V168M747 148V158M738 163L747 158L756 163" stroke-width=".9"/>
<path d="M769 155Q777 148 785 155Q777 162 769 155Z" fill="none" stroke="#222" stroke-width="1.300"/><circle cx="777" cy="155" r="2.500" fill="#222"/><path d="M769 148L787 166" stroke="#222" stroke-width="1.400"/>
<path class="k" d="M816 148H834V165H816Z"/><path d="M818 157Q825 149 832 157Q825 164 818 157Z" fill="#fff"/><circle cx="825" cy="157" r="3" fill="#222"/>
<g fill="none" stroke="#fff" stroke-width="1.300"><path d="M866 162L871 158L875 162L871 166Z"/><path d="M878 163L882 160L885 163L882 166Z"/><path d="M878 151L882 148L885 151L882 154Z"/><path d="M866 150L870 153"/><path d="M871 159L879 152"/></g>
<path class="i" d="M895 154V165H905V152H899V148M905 148V152M902 148V152M899 151H908M892 158H895M892 162H895" stroke-width="1.100"/>
<path class="k" d="M921 148L931 151V165L921 161Z"/><path d="M923 152L930 154V160L923 158Z" fill="#fff"/><path class="k" d="M931 153L936 150V167L931 165Z"/>
<path class="i" d="M946 150L961 162L957 167H946ZM949 158L953 154M950 163H956" stroke-width="1.100"/><path class="k" d="M946 161L951 164V167H946Z"/>
<path d="M975 148H990L984 157V167L981 165V157Z" fill="#fff"/>
<path d="M1001 155h11l-5.500 5z" fill="#fff"/>
<path class="k" d="M1024 148H1040V151H1036V165H1030V151H1024Z"/><path d="M1032 151V165M1034 151V165" stroke="#fff" stroke-width=".7"/><rect class="i" x="1024" y="157" width="6" height="8" stroke-width=".9"/>
<path d="M1052 168L1055 161L1064 151L1067 148L1070 150L1067 154L1058 164Z" fill="#d4d4d4" stroke="#c4c4c4"/>

<!-- ================= TASKBAR ================= -->
<rect x="0" y="728" width="1366" height="40" fill="url(#tb)"/>
<rect x="0" y="728" width="1366" height="1" fill="#3f4a55"/>
<circle cx="25" cy="749" r="18" fill="url(#orb)" stroke="#0a2238"/>
<path d="M15 743Q20 741 24 743L23 749Q19 747 14 749Z" fill="#e8542e"/>
<path d="M26 743Q31 745 35 743L34 749Q30 751 25 749Z" fill="#8cc63f"/>
<path d="M14 751Q19 749 23 751L22 757Q18 755 13 757Z" fill="#3fa9f5"/>
<path d="M25 751Q30 753 34 751L33 757Q29 759 24 757Z" fill="#fbc02d"/>
<ellipse cx="89" cy="749" rx="18" ry="8" fill="none" stroke="#e0a92e" stroke-width="2" transform="rotate(-40 89 749)"/>
<text x="89" y="759" font-size="32" font-weight="bold" fill="#1d8fd8" text-anchor="middle">e</text>
<g stroke="#6a6e72" stroke-width="1"><rect x="122.500" y="729.500" width="53" height="37" rx="2" fill="url(#btn)"/><rect x="184.500" y="729.500" width="57" height="37" rx="2" fill="url(#btn)"/><rect x="246.500" y="729.500" width="57" height="37" rx="2" fill="url(#btn)"/><rect x="308.500" y="729.500" width="57" height="37" rx="2" fill="url(#btn)"/><rect x="370.500" y="729.500" width="57" height="37" rx="2" fill="url(#btn)"/></g>
<rect x="177" y="729" width="2" height="38" fill="#3a3e42"/>
<rect x="309" y="730" width="56" height="36" rx="2" fill="url(#btna)"/>
<path d="M133 738H147L149 740H163V762H133Z" fill="#e8c66a" stroke="#b8954a" stroke-width=".6"/><rect x="135" y="741" width="26" height="3" fill="#f6f0e0"/><path d="M137 738h4v2h-4z" fill="#3aa83a"/><path d="M146 738h4v2h-4z" fill="#d84040"/><path d="M133 745H163V762H133Z" fill="#f2dc8e"/><path d="M139 762V754H157V762H153V758H143V762Z" fill="#7ab8e0"/>
<circle cx="213" cy="748" r="16" fill="#1c5aa8"/><circle cx="213" cy="746" r="12" fill="#2b7cd0"/><path d="M199 746L218 743L228 755L214 761L201 755Z" fill="#f4f4f4"/><path d="M204 750L214 753L224 748" fill="none" stroke="#9fb6d4"/><path d="M200 757Q212 766 226 757L214 764Z" fill="#0e2f60"/>
<circle cx="275" cy="748" r="15" fill="#d9151b"/><ellipse cx="275" cy="748" rx="6" ry="11.500" fill="#2a2d31"/>
<rect x="321" y="732" width="32" height="32" fill="#203642" stroke="#29a0dc" stroke-width="1.600"/><circle cx="337" cy="748" r="11" fill="none" stroke="#29a0dc" stroke-width="1.800"/><path d="M333 741V755M343 741L334 748L343 756" fill="none" stroke="#29a0dc" stroke-width="2"/>
<path d="M386 745Q398 734 408 742Q413 748 404 749Q402 755 398 760Q386 764 384 756Q382 750 386 745Z" fill="#ede6d6" stroke="#a89878" stroke-width=".6"/><circle cx="392" cy="747" r="2.500" fill="#d84040"/><circle cx="389" cy="753" r="2.500" fill="#3aa83a"/><circle cx="395" cy="757" r="2.500" fill="#3f7fd0"/><circle cx="399" cy="743" r="2" fill="#e0c040"/><path d="M401 760L413 735" stroke="#d8943a" stroke-width="3"/>
<text x="1128" y="750" font-size="12" fill="#fff">RU</text>
<path d="M1159 751h8l-4-4z" fill="#fff"/>
<path d="M1181 742V759" stroke="#fff" stroke-width="1.400"/><path d="M1182 742H1192V750H1182Z" fill="#ddd"/><circle cx="1191" cy="753" r="5" fill="#d02020"/><path d="M1189 751l4 4M1193 751l-4 4" stroke="#fff"/>
<rect x="1206" y="743" width="9" height="13" fill="#111" stroke="#fff" stroke-width="1.300" stroke-dasharray="3 1"/><path d="M1212 744h4v2h4v2h-4v3h-4v-3h-1v-2h1zM1210 751h5v6h-5z" fill="#fff"/>
<g fill="#fff"><rect x="1230" y="753" width="2" height="2"/><rect x="1233" y="751" width="2" height="4"/><rect x="1236" y="748" width="2" height="7"/></g><g fill="#777"><rect x="1239" y="745" width="2" height="10"/></g>
<path d="M1254 747h3l4-4v14l-4-4h-3z" fill="#ddd"/><path d="M1263 746a5 5 0 0 1 0 8" fill="none" stroke="#ddd"/>
<text x="1313" y="745" font-size="12" fill="#fff" text-anchor="middle">7:04</text>
<text x="1313" y="762" font-size="12" fill="#fff" text-anchor="middle">18.01.2019</text>
<rect x="1353" y="729" width="13" height="39" fill="#3a3e42"/><rect x="1353" y="729" width="1" height="39" fill="#777"/>
</svg>
</body></html>
